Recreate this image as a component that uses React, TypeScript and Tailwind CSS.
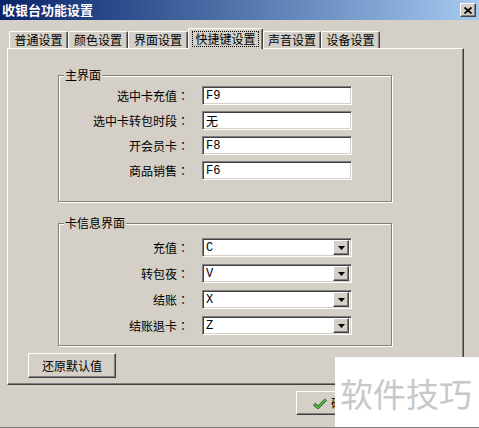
import React from 'react';

const cjk = "font-['Noto_Sans_CJK_SC','Noto_Sans',sans-serif]";
const cjkTc = "font-['Noto_Sans_CJK_TC','Noto_Sans_CJK_SC',sans-serif]";
const mono = "font-['Liberation_Mono','Noto_Sans_CJK_SC',monospace]";

const tabs = [
  { label: '普通设置', w: 'w-[59px]' },
  { label: '颜色设置', w: 'w-[60px]' },
  { label: '界面设置', w: 'w-[60px]' },
  { label: '快捷键设置', w: 'w-[75px]', active: true },
  { label: '声音设置', w: 'w-[58px]' },
  { label: '设备设置', w: 'w-[59px]' },
];

const mainRows = [
  { label: '选中卡充值：', value: 'F9' },
  { label: '选中卡转包时段：', value: '无' },
  { label: '开会员卡：', value: 'F8' },
  { label: '商品销售：', value: 'F6' },
];

const cardRows = [
  { label: '充值：', value: 'C' },
  { label: '转包夜：', value: 'V' },
  { label: '结账：', value: 'X' },
  { label: '结账退卡：', value: 'Z' },
];

const sunken =
  'border border-t-[#808080] border-l-[#808080] border-r-white border-b-white shadow-[inset_1px_1px_0_#404040,inset_-1px_-1px_0_#d4d0c8] bg-white';

const raised =
  'border border-t-white border-l-white border-r-[#404040] border-b-[#404040] shadow-[inset_-1px_-1px_0_#808080] bg-[#d4d0c8]';

function GroupBox({ title, className, children }: { title: string; className: string; children: React.ReactNode }) {
  return (
    <div className={`relative border border-[#808080] shadow-[inset_1px_1px_0_#fff,1px_1px_0_#fff] ${className}`}>
      <span className="absolute left-[5px] top-[-8px] px-[1px] bg-[#d4d0c8] text-[12px] leading-[14px]">{title}</span>
      {children}
    </div>
  );
}

function Label({ text }: { text: string }) {
  return <div className={`w-[130px] text-right text-[12px] leading-[19px] ${cjkTc}`}>{text}</div>;
}

function Field({ value }: { value: string }) {
  const isCjk = /[^\x00-\x7f]/.test(value);
  return (
    <div className={`w-[150px] h-[19px] flex items-center pl-[3px] ${sunken}`}>
      <span className={`text-[12px] leading-[14px] ${isCjk ? cjk : mono}`}>{value}</span>
    </div>
  );
}

function Combo({ value }: { value: string }) {
  return (
    <div className={`w-[150px] h-[19px] flex items-center pl-[3px] pr-[2px] ${sunken}`}>
      <span className={`flex-1 text-[12px] leading-[14px] ${mono}`}>{value}</span>
      <div className={`w-[16px] h-[15px] flex items-center justify-center ${raised}`}>
        <svg width="7" height="4" viewBox="0 0 7 4">
          <polygon points="0,0 7,0 3.5,4" fill="#000" />
        </svg>
      </div>
    </div>
  );
}

export default function App() {
  return (
    <div className={`relative w-[479px] h-[428px] overflow-hidden bg-[#d4d0c8] text-black border-b border-[#808080] ${cjk}`}>
      {/* title bar */}
      <div className="h-[20px] flex items-center pl-[2px] pr-[3px] bg-gradient-to-r from-[#0a246a] to-[#a6caf0]">
        <span className="text-white font-bold text-[13px] leading-[16px]">收银台功能设置</span>
        <div className={`ml-auto w-[16px] h-[14px] flex items-center justify-center ${raised}`}>
          <svg width="8" height="7" viewBox="0 0 8 7">
            <path d="M0.5 0.5 L7.5 6.5 M7.5 0.5 L0.5 6.5" stroke="#000" strokeWidth="1.8" />
          </svg>
        </div>
      </div>

      {/* tabs */}
      <div className="mt-[8px] ml-[9px] h-[20px] flex items-end">
        {tabs.map((t) =>
          t.active ? (
            <div
              key={t.label}
              className={`${t.w} h-[21px] mb-[-1px] relative z-10 flex items-center justify-center bg-[#d4d0c8] border-l border-t border-l-white border-t-white border-r border-r-[#404040] shadow-[inset_-1px_0_0_#808080] rounded-t-[2px]`}
            >
              <span className="px-[2px] text-[12px] leading-[14px] outline-1 outline-dotted outline-black -mt-[1px]">
                {t.label}
              </span>
            </div>
          ) : (
            <div
              key={t.label}
              className={`${t.w} h-[17px] flex items-center justify-center border-l border-t border-l-white border-t-white border-r border-r-[#404040] shadow-[inset_-1px_0_0_#808080] rounded-t-[2px]`}
            >
              <span className="text-[12px] leading-[14px]">{t.label}</span>
            </div>
          )
        )}
      </div>

      {/* panel */}
      <div className="ml-[7px] w-[457px] h-[337px] border border-t-white border-l-white border-r-[#404040] border-b-[#404040] shadow-[inset_-1px_-1px_0_#808080] flex flex-col">
        <GroupBox title="主界面" className="ml-[50px] mt-[26px] w-[334px] h-[127px] pt-[10px]">
          <div className="flex flex-col gap-[6px]">
            {mainRows.map((r) => (
              <div key={r.label} className="flex items-center gap-[13px]">
                <Label text={r.label} />
                <Field value={r.value} />
              </div>
            ))}
          </div>
        </GroupBox>

        <GroupBox title="卡信息界面" className="ml-[50px] mt-[21px] w-[334px] h-[123px] pt-[14px]">
          <div className="flex flex-col gap-[7px]">
            {cardRows.map((r) => (
              <div key={r.label} className="flex items-center gap-[13px]">
                <Label text={r.label} />
                <Combo value={r.value} />
              </div>
            ))}
          </div>
        </GroupBox>

        <button
          className={`ml-[20px] mt-[7px] w-[88px] h-[25px] flex items-center justify-center text-[12px] leading-[14px] ${raised}`}
        >
          还原默认值
        </button>
      </div>

      {/* bottom buttons */}
      <div className="mt-[6px] ml-[296px] flex">
        <button className={`w-[75px] h-[24px] flex items-center pl-[16px] gap-[4px] text-[12px] leading-[14px] ${raised}`}>
          <svg width="14" height="11" viewBox="0 0 14 11">
            <path d="M1 6 L5 9.5 L13 1.5" fill="none" stroke="#1f5f1f" strokeWidth="3" />
            <path d="M1 6 L5 9.5 L13 1.5" fill="none" stroke="#5cbf4a" strokeWidth="1.6" />
          </svg>
          确定
        </button>
      </div>

      {/* watermark */}
      <div className="absolute left-[335px] top-[357px] w-[144px] h-[71px] bg-white flex items-center pl-[5px]">
        <span className="text-[33px] leading-[40px] text-[#c8c8c8]">软件技巧</span>
      </div>
    </div>
  );
}
